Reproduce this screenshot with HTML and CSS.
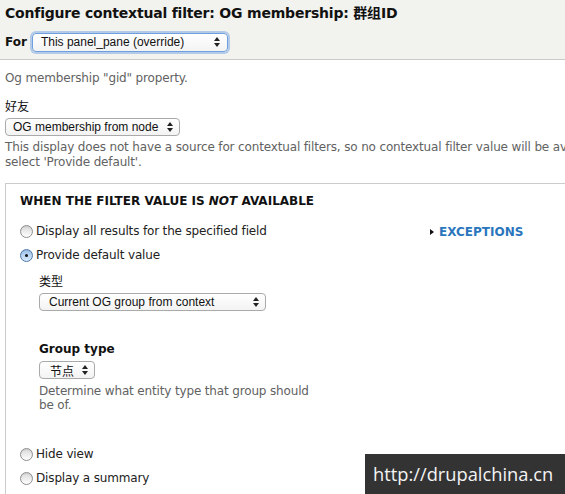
FILE: index.html
```html
<!DOCTYPE html>
<html>
<head>
<meta charset="utf-8">
<link rel="stylesheet" href="styles.css">
</head>
<body>
<div class="page">
  <div class="dialog-header">
    <h1 class="title">Configure contextual filter: OG membership: 群组ID</h1>
    <div class="for-row">
      <span class="for-label">For</span>
      <div class="select select-for"><span>This panel_pane (override)</span><svg class="arrows" width="6" height="10" viewBox="0 0 6 10"><path d="M0 4 L3 0 L6 4 Z M0 6 L3 10 L6 6 Z"/></svg></div>
    </div>
  </div>
  <div class="dialog-body">
    <p class="desc intro">Og membership "gid" property.</p>
    <div class="label cjk">好友</div>
    <div class="select select-rel"><span>OG membership from node</span><svg class="arrows" width="6" height="10" viewBox="0 0 6 10"><path d="M0 4 L3 0 L6 4 Z M0 6 L3 10 L6 6 Z"/></svg></div>
    <p class="desc wide">This display does not have a source for contextual filters, so no contextual filter value will be available unless you<br>select 'Provide default'.</p>
    <div class="fieldset">
      <div class="legend">WHEN THE FILTER VALUE IS <em>NOT</em> AVAILABLE</div>
      <div class="fs-grid">
        <div class="options">
          <div class="radio-row"><span class="radio"></span><span>Display all results for the specified field</span></div>
          <div class="radio-row"><span class="radio checked"></span><span>Provide default value</span></div>
          <div class="sub">
            <div class="label cjk sub-first">类型</div>
            <div class="select select-type"><span>Current OG group from context</span><svg class="arrows" width="6" height="10" viewBox="0 0 6 10"><path d="M0 4 L3 0 L6 4 Z M0 6 L3 10 L6 6 Z"/></svg></div>
            <div class="label bold gt-label">Group type</div>
            <div class="select select-gt"><span class="cjk-inline">节点</span><svg class="arrows" width="6" height="10" viewBox="0 0 6 10"><path d="M0 4 L3 0 L6 4 Z M0 6 L3 10 L6 6 Z"/></svg></div>
            <p class="desc narrow">Determine what entity type that group should be of.</p>
          </div>
          <div class="radio-row hide-row"><span class="radio"></span><span>Hide view</span></div>
          <div class="radio-row"><span class="radio"></span><span>Display a summary</span></div>
        </div>
        <div class="exceptions"><span class="tri"></span><span>EXCEPTIONS</span></div>
      </div>
    </div>
  </div>
</div>
<div class="watermark">http://drupalchina.cn</div>
</body>
</html>
```
FILE: styles.css
```css
html, body {
  margin: 0;
  padding: 0;
  background: #fff;
  overflow: hidden;
}
body {
  width: 565px;
  height: 494px;
  position: relative;
  font-family: "DejaVu Sans", "Noto Sans CJK SC", sans-serif;
  font-size: 12px;
  color: #222;
}
.page {
  width: 565px;
}
.dialog-header {
  height: 60px;
  box-sizing: border-box;
  padding: 3px 5px 0;
  background: #f2f2ee;
  border-bottom: 1px solid #c9c9c9;
}
.title {
  margin: 0;
  font-size: 14px;
  font-weight: bold;
  line-height: 20px;
  letter-spacing: -0.2px;
  color: #111;
  white-space: nowrap;
}
.for-row {
  margin-top: 8px;
  height: 22px;
  display: flex;
  align-items: center;
}
.for-label {
  font-weight: bold;
  font-size: 12px;
  color: #111;
}
.select {
  display: flex;
  align-items: center;
  justify-content: space-between;
  box-sizing: border-box;
  height: 18px;
  border: 1px solid #aaa;
  border-radius: 4px;
  background: linear-gradient(#ffffff, #f3f3f3);
  font-family: "Liberation Sans", "Noto Sans CJK SC", sans-serif;
  font-size: 12px;
  color: #111;
  padding: 0 6px 0 7px;
  white-space: nowrap;
}
.arrows {
  fill: #222;
  flex: none;
}
.select-for {
  margin-left: 5px;
  width: 196px;
  height: 19px;
  border-color: #6f9fdc;
  box-shadow: 0 0 0 2px rgba(130, 170, 230, 0.55);
  padding-left: 8px;
  padding-right: 7px;
}
.select-rel {
  margin-top: 4px;
  width: 175px;
}
.dialog-body {
  padding: 0 5px;
}
.desc {
  margin: 0;
  color: #626262;
  font-size: 12px;
  letter-spacing: -0.15px;
}
.intro {
  margin-top: 10px;
  line-height: 16px;
}
.label {
  margin-top: 12px;
  line-height: 16px;
  color: #111;
}
.cjk {
  font-family: "Noto Sans CJK SC", sans-serif;
  font-size: 12px;
}
.cjk-inline {
  font-family: "Noto Sans CJK SC", sans-serif;
  font-size: 12px;
  padding-left: 2px;
}
.bold {
  font-weight: bold;
  font-size: 12px;
}
.wide {
  margin-top: 4px;
  line-height: 15px;
  white-space: nowrap;
}
.fieldset {
  margin-top: 13px;
  width: 620px;
  height: 400px;
  box-sizing: border-box;
  border: 1px solid #cccccc;
  padding: 9px 0 0 14px;
}
.legend {
  font-weight: bold;
  font-size: 12px;
  line-height: 16px;
  color: #111;
  white-space: nowrap;
}
.legend em {
  font-style: italic;
}
.fs-grid {
  margin-top: 12px;
  display: grid;
  grid-template-columns: 410px auto;
  align-items: start;
}
.radio-row {
  display: flex;
  align-items: center;
  gap: 3px;
  height: 20px;
  letter-spacing: -0.15px;
  white-space: nowrap;
}
.radio-row + .radio-row {
  margin-top: 4px;
}
.radio {
  width: 13px;
  height: 13px;
  box-sizing: border-box;
  border-radius: 50%;
  border: 1px solid #8f8f8f;
  background: linear-gradient(#d9d9d9, #ffffff);
  box-shadow: inset 0 1px 1px rgba(0, 0, 0, 0.08);
  position: relative;
  flex: none;
}
.radio.checked {
  border-color: #5078a8;
  background: linear-gradient(#9fc2ec, #d8eafb);
}
.radio.checked::after {
  content: "";
  position: absolute;
  left: 4px;
  top: 4px;
  width: 3px;
  height: 3px;
  border-radius: 50%;
  background: #111;
}
.sub {
  padding-left: 19px;
}
.sub-first {
  margin-top: 8px;
}
.select-type {
  margin-top: 4px;
  width: 227px;
  padding-left: 9px;
}
.gt-label {
  margin-top: 30px;
}
.select-gt {
  margin-top: 4px;
  width: 56px;
  padding-left: 8px;
}
.narrow {
  margin-top: 5px;
  width: 275px;
  line-height: 14px;
}
.hide-row {
  margin-top: 32px;
}
.exceptions {
  display: flex;
  align-items: center;
  height: 20px;
  margin-top: 1px;
  color: #2a76bd;
  font-weight: bold;
  font-size: 12px;
  white-space: nowrap;
}
.tri {
  width: 0;
  height: 0;
  border-left: 4px solid #111;
  border-top: 3.5px solid transparent;
  border-bottom: 3.5px solid transparent;
  margin-right: 5px;
}
.watermark {
  position: absolute;
  right: 0;
  bottom: 0;
  width: 200px;
  height: 40px;
  box-sizing: border-box;
  padding-left: 8px;
  background: #333333;
  color: #f4f4f4;
  font-family: "Open Sans", sans-serif;
  font-size: 18.3px;
  line-height: 40px;
  white-space: nowrap;
}
```
